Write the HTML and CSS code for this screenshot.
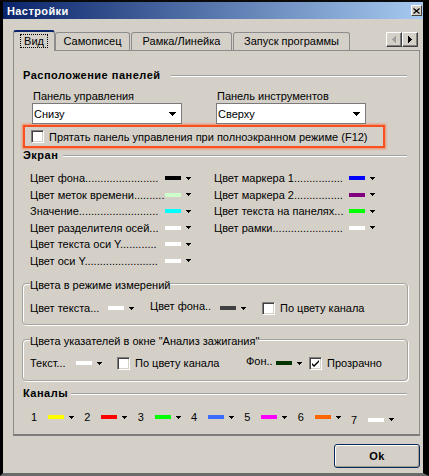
FILE: index.html
```html
<!DOCTYPE html>
<html lang="ru">
<head>
<meta charset="utf-8">
<title>Настройки</title>
<link rel="stylesheet" href="styles.css">
</head>
<body>
<svg class="defs" aria-hidden="true">
  <symbol id="dd" viewBox="0 0 5 3"><path d="M0 0h5v1h-1v1h-1v1h-1v-1h-1v-1h-1z"/></symbol>
  <symbol id="cdd" viewBox="0 0 7 4"><path d="M0 0h7v1h-1v1h-1v1h-1v1h-1v-1h-1v-1h-1v-1h-1z"/></symbol>
</svg>
<div class="window">
  <div class="titlebar">
    <span class="title">Настройки</span>
    <span class="close"><svg width="7" height="6" viewBox="0 0 7 6"><path d="M0.5 0.5l6 5M6.5 0.5l-6 5" stroke="#000" stroke-width="1.2" fill="none"/></svg></span>
  </div>
  <div class="content">
    <div class="tabs">
      <div class="tab sel t1"><span class="focus">Вид</span></div>
      <div class="tab t2">Самописец</div>
      <div class="tab t3">Рамка/Линейка</div>
      <div class="tab t4">Запуск программы</div>
      <div class="spin">
        <span class="sbtn"><svg width="4" height="7" viewBox="0 0 4 7"><path d="M4 0v7h-1v-1h-1v-1h-1v-1h-1v-1h1v-1h1v-1h1v-1z" fill="#a0a0a0"/></svg></span>
        <span class="sbtn"><svg width="4" height="7" viewBox="0 0 4 7"><path d="M0 0v7h1v-1h1v-1h1v-1h1v-1h-1v-1h-1v-1h-1v-1z" fill="#000"/></svg></span>
      </div>
    </div>
    <div class="panel">
      <div class="sect s1">Расположение панелей</div>
      <div class="combos">
        <div class="cfield">
          <div class="clabel">Панель управления</div>
          <div class="combo"><span>Снизу</span><svg class="carr"><use href="#cdd"/></svg></div>
        </div>
        <div class="cfield">
          <div class="clabel">Панель инструментов</div>
          <div class="combo"><span>Сверху</span><svg class="carr"><use href="#cdd"/></svg></div>
        </div>
      </div>
      <div class="hl">
        <span class="cb"></span>
        <span class="cbtext">Прятать панель управления при полноэкранном режиме (F12)</span>
      </div>
      <div class="sect s2">Экран</div>
      <div class="colors">
        <div class="ccol">
          <div class="crow"><span class="lbl">Цвет фона........................</span><span class="sw c-black"></span><svg class="dd"><use href="#dd"/></svg></div>
          <div class="crow"><span class="lbl">Цвет меток времени..........</span><span class="sw c-mint"></span><svg class="dd"><use href="#dd"/></svg></div>
          <div class="crow"><span class="lbl">Значение..........................</span><span class="sw c-cyan"></span><svg class="dd"><use href="#dd"/></svg></div>
          <div class="crow"><span class="lbl">Цвет разделителя осей...</span><span class="sw c-white"></span><svg class="dd"><use href="#dd"/></svg></div>
          <div class="crow"><span class="lbl">Цвет текста оси Y............</span><span class="sw c-white"></span><svg class="dd"><use href="#dd"/></svg></div>
          <div class="crow"><span class="lbl">Цвет оси Y........................</span><span class="sw c-white"></span><svg class="dd"><use href="#dd"/></svg></div>
        </div>
        <div class="ccol">
          <div class="crow"><span class="lbl">Цвет маркера 1................</span><span class="sw c-blue"></span><svg class="dd"><use href="#dd"/></svg></div>
          <div class="crow"><span class="lbl">Цвет маркера 2................</span><span class="sw c-purple"></span><svg class="dd"><use href="#dd"/></svg></div>
          <div class="crow"><span class="lbl">Цвет текста на панелях...</span><span class="sw c-lime"></span><svg class="dd"><use href="#dd"/></svg></div>
          <div class="crow"><span class="lbl">Цвет рамки.......................</span><span class="sw c-white"></span><svg class="dd"><use href="#dd"/></svg></div>
        </div>
      </div>
      <fieldset class="grp g1">
        <legend>Цвета в режиме измерений</legend>
        <div class="grow">
          <span class="glbl w78">Цвет текста...</span><span class="sw c-white"></span><svg class="dd"><use href="#dd"/></svg>
          <span class="glbl w70 ml16 up">Цвет фона..</span><span class="sw c-dgrey"></span><svg class="dd"><use href="#dd"/></svg>
          <span class="cb ml16"></span><span class="cbtext">По цвету канала</span>
        </div>
      </fieldset>
      <fieldset class="grp g2">
        <legend>Цвета указателей в окне "Анализ зажигания"</legend>
        <div class="grow">
          <span class="glbl w46">Текст...</span><span class="sw c-white"></span><svg class="dd"><use href="#dd"/></svg>
          <span class="cb ml15"></span><span class="cbtext w111">По цвету канала</span>
          <span class="glbl w30 up">Фон..</span><span class="sw c-dgreen"></span><svg class="dd"><use href="#dd"/></svg>
          <span class="cb ml7"><svg width="9" height="9" viewBox="0 0 9 9"><path d="M1 4l2 2 5-5v2l-5 5-2-2z" fill="#000"/></svg></span><span class="cbtext">Прозрачно</span>
        </div>
      </fieldset>
      <div class="sect s3">Каналы</div>
      <div class="chans">
        <div class="ch"><span class="num">1</span><span class="sw c-yellow"></span><svg class="dd"><use href="#dd"/></svg></div>
        <div class="ch"><span class="num">2</span><span class="sw c-red"></span><svg class="dd"><use href="#dd"/></svg></div>
        <div class="ch"><span class="num">3</span><span class="sw c-lime"></span><svg class="dd"><use href="#dd"/></svg></div>
        <div class="ch"><span class="num">4</span><span class="sw c-royal"></span><svg class="dd"><use href="#dd"/></svg></div>
        <div class="ch"><span class="num">5</span><span class="sw c-magenta"></span><svg class="dd"><use href="#dd"/></svg></div>
        <div class="ch"><span class="num">6</span><span class="sw c-orange"></span><svg class="dd"><use href="#dd"/></svg></div>
        <div class="ch low"><span class="num">7</span><span class="sw c-white"></span><svg class="dd"><use href="#dd"/></svg></div>
      </div>
    </div>
    <div class="footer">
      <button class="ok">Ok</button>
    </div>
  </div>
</div>
</body>
</html>
```

FILE: styles.css
```css
* { box-sizing: border-box; }
html, body { margin: 0; padding: 0; background: #000; }
body {
  font-family: "Liberation Sans", Arial, sans-serif;
  font-size: 11px;
  color: #000;
}
.defs { width: 0; height: 0; overflow: hidden; display: block; }

.window {
  width: 429px;
  height: 476px;
  background: #d4d0c8;
  border-top: 2px solid #0a0a0a;
  border-left: 3px solid #000;
  border-right: 6px solid #000;
  border-bottom: 3px solid #6a6a6a;
  display: flex;
  flex-direction: column;
}

.titlebar {
  height: 17px;
  flex: none;
  background: linear-gradient(to right, #0a246a, #a6caf0);
  display: flex;
  align-items: center;
  justify-content: space-between;
  padding: 0 1px 0 4px;
}
.title { color: #fff; font-weight: bold; font-size: 11px; letter-spacing: 0.4px; }
.close {
  width: 11px;
  height: 11px;
  background: #d4d0c8;
  border: 1px solid;
  border-color: #fff #404040 #404040 #fff;
  display: flex;
  align-items: center;
  justify-content: center;
}

.content {
  flex: 1;
  padding: 11px 3px 0 10px;
  display: flex;
  flex-direction: column;
}

.tabs {
  display: flex;
  align-items: flex-end;
  height: 20px;
  flex: none;
}
.tab {
  height: 18px;
  border: 1px solid #8c8c8c;
  border-bottom: none;
  border-radius: 3px 3px 0 0;
  text-align: center;
  line-height: 17px;
  background: #d4d0c8;
  white-space: nowrap;
}
.tab.sel {
  height: 21px;
  margin-bottom: -1px;
  border-top: 2px solid #0a246a;
  position: relative;
  z-index: 1;
  line-height: 17px;
  padding-top: 1px;
}
.t1 { width: 42px; }
.t2 { width: 75px; margin-right: 1px; }
.t3 { width: 101px; margin-right: 1px; }
.t4 { width: 117px; }
.focus {
  display: inline-block;
  padding: 0 3px;
  line-height: 12px;
  border: 1px dotted #000;
}
.spin {
  margin-left: auto;
  margin-right: 2px;
  margin-bottom: 3px;
  display: flex;
}
.sbtn {
  width: 16px;
  height: 15px;
  border: 1px solid;
  border-color: #fff #404040 #404040 #fff;
  box-shadow: inset -1px -1px #808080;
  display: flex;
  align-items: center;
  justify-content: center;
}

.panel {
  height: 386px;
  flex: none;
  border: 1px solid #8c8c8c;
  border-bottom: 2px solid #7c7c7c;
  padding: 0 12px 0 9px;
}

.sect {
  display: flex;
  align-items: center;
  font-weight: bold;
  letter-spacing: 0.5px;
  height: 14px;
  line-height: 14px;
  white-space: nowrap;
}
.sect::after {
  content: "";
  flex: 1;
  margin-left: 5px;
  margin-top: 2px;
  border-top: 1px solid #a0a0a0;
  border-bottom: 1px solid #fff;
}
.s1 { margin-top: 17px; }
.s1::after { margin-left: 10px; }
.s2 { margin-top: 0; }
.s3 { margin-top: 5px; }
.s3::after { margin-left: 3px; }

.combos {
  display: flex;
  margin-left: 9px;
  margin-top: 7px;
}
.cfield { width: 184px; }
.clabel { height: 14px; line-height: 14px; padding-left: 1px; }
.combo {
  width: 150px;
  height: 21px;
  background: #fff;
  border: 1px solid #7a7a7a;
  display: flex;
  align-items: center;
  justify-content: space-between;
  padding: 0 5px 0 1px;
}
.carr { width: 7px; height: 4px; }

.hl {
  margin-top: 1px;
  width: 362px;
  height: 23px;
  border: 2px solid #fa5020;
  box-shadow: 0 0 2px 1px rgba(255, 110, 60, 0.7);
  display: flex;
  align-items: center;
  padding-left: 6px;
}

.cb {
  width: 13px;
  height: 13px;
  flex: none;
  background: #fff;
  border: 1px solid;
  border-color: #808080 #fff #fff #808080;
  box-shadow: inset 1px 1px #404040, inset -1px -1px #d4d0c8;
  display: flex;
  align-items: center;
  justify-content: center;
}
.cbtext { margin-left: 5px; white-space: nowrap; flex: none; }

.colors {
  display: flex;
  margin: 8px 0 0 7px;
}
.ccol { width: 184px; }
.crow {
  height: 16.5px;
  display: flex;
  align-items: center;
}
.lbl {
  width: 131px;
  flex: none;
  margin-right: 4px;
  white-space: nowrap;
}
.sw { width: 16px; height: 4px; flex: none; }
.dd { width: 5px; height: 3px; margin-left: 5px; flex: none; }

.c-black { background: #000; }
.c-mint { background: #ccffcc; }
.c-cyan { background: #00ffff; }
.c-white { background: #fff; }
.c-blue { background: #0000ff; }
.c-purple { background: #800080; }
.c-lime { background: #00ff00; }
.c-dgrey { background: #404040; }
.c-dgreen { background: #003300; }
.c-yellow { background: #ffff00; }
.c-red { background: #ff0000; }
.c-royal { background: #3c6cff; }
.c-magenta { background: #ff00ff; }
.c-orange { background: #ff6600; }

.grp {
  margin: 0 -1px;
  border: 1px solid #a5a3a0;
  border-radius: 4px;
  box-shadow: inset 1px 1px #fff, 1px 1px #fff;
  padding: 7px 8px 7px 7px;
  min-width: 0;
}
.grp legend {
  padding: 4px 0 0;
  line-height: 14px;
  background: #d4d0c8;
}
.g1 { margin-top: 5px; }
.g2 { margin-top: 5px; padding-top: 6px; padding-bottom: 8px; }
.grow {
  display: flex;
  align-items: center;
  height: 18px;
}
.glbl { white-space: nowrap; flex: none; }
.up { margin-bottom: 4px; }
.w78 { width: 78px; }
.w70 { width: 70px; }
.w46 { width: 46px; }
.w30 { width: 30px; }
.w111 { width: 111px; }
.ml16 { margin-left: 16px; }
.ml15 { margin-left: 15px; }
.ml7 { margin-left: 7px; }

.chans {
  display: flex;
  margin: 9px 0 0 8px;
  height: 16px;
}
.ch {
  width: 53.33px;
  flex: none;
  display: flex;
  align-items: center;
}
.ch.low { padding-top: 5px; }
.num { width: 17px; }

.footer {
  display: flex;
  justify-content: flex-end;
  margin-top: 8px;
}
.ok {
  width: 86px;
  height: 24px;
  margin: 0;
  font-family: "Liberation Sans", Arial, sans-serif;
  font-size: 11px;
  font-weight: bold;
  letter-spacing: 0.5px;
  color: #000;
  background: #d4d0c8;
  border: 1px solid #0a2a5a;
  border-radius: 3px;
  box-shadow: inset 1px 1px #fff, inset -1px -1px #a09d96;
  padding: 0;
}
```
